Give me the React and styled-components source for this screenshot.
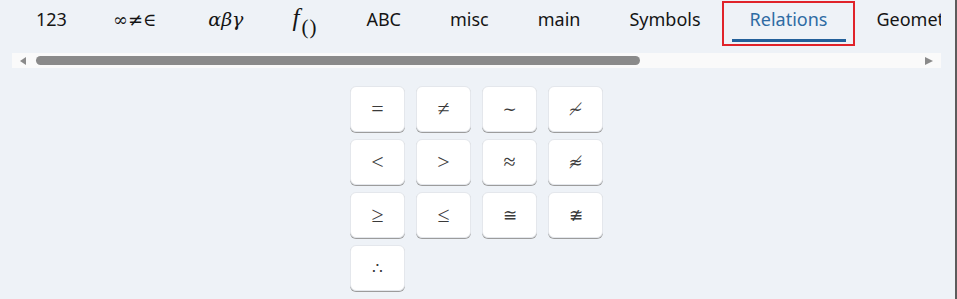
import React from "react";
import styled, { createGlobalStyle } from "styled-components";

const Global = createGlobalStyle`
  html, body { margin: 0; padding: 0; }
  body {
    background: #eef2f7;
    font-family: "Noto Sans", "Open Sans", sans-serif;
    overflow: hidden;
  }
`;

const Page = styled.div`
  box-sizing: border-box;
  width: 957px;
  height: 299px;
  border-right: 2px solid #5c5c5c;
  padding: 0 14px 0 12px;
  background: #eef2f7;
`;

const TabStrip = styled.div`
  display: flex;
  height: 53px;
  overflow: hidden;
  white-space: nowrap;
`;

const Tab = styled.div`
  position: relative;
  box-sizing: border-box;
  flex: none;
  height: 39px;
  margin-top: 4px;
  padding: 3px 24.5px 0;
  font-size: 18px;
  line-height: 24px;
  color: ${(p) => (p.$active ? "#2e6ba3" : "#151515")};
  outline: ${(p) => (p.$active ? "2px solid #e0232a" : "none")};
  outline-offset: 1px;
  &:first-child {
    padding-left: 24px;
  }
  &::after {
    content: "";
    display: ${(p) => (p.$active ? "block" : "none")};
    position: absolute;
    left: 7px;
    right: 6px;
    bottom: 1px;
    height: 3px;
    background: #23609a;
  }
`;

const MathLabel = styled.span`
  font-family: "DejaVu Serif", "Liberation Serif", serif;
  font-size: ${(p) => p.$size || 15}px;
  font-style: ${(p) => (p.$italic ? "italic" : "normal")};
  margin-left: ${(p) => p.$shift || 0}px;
`;

const FuncLabel = styled.span`
  font-family: "Liberation Serif", "DejaVu Serif", serif;
  font-style: italic;
  font-size: 25px;
  position: relative;
  top: -1px;
`;

const Sub = styled.span`
  font-family: "Liberation Serif", serif;
  font-style: normal;
  font-size: 21px;
  position: relative;
  top: 8px;
  margin-left: 2px;
  letter-spacing: 1px;
`;

const ScrollTrack = styled.div`
  display: flex;
  align-items: center;
  height: 15px;
  background: #fafafa;
  padding: 0 8px;
`;

const Thumb = styled.div`
  height: 9px;
  border-radius: 5px;
  background: #8a8a8a;
  margin-left: 10px;
`;

const Spacer = styled.div`
  flex: 1;
`;

const Arrow = styled.svg`
  display: block;
  flex: none;
`;

const KeyGrid = styled.div`
  display: grid;
  grid-template-columns: repeat(4, 55px);
  grid-auto-rows: 46px;
  column-gap: 11px;
  row-gap: 7px;
  justify-content: center;
  margin-top: 18px;
`;

const Key = styled.button`
  box-sizing: border-box;
  border: 1px solid #e4e7ec;
  border-radius: 6px;
  background: #ffffff;
  box-shadow: 0 1px 0 #9c9c9c;
  font-family: ${(p) =>
    p.$alt ? '"DejaVu Serif", serif' : '"Liberation Serif", "DejaVu Serif", serif'};
  font-size: ${(p) => (p.$alt ? 17 : 22)}px;
  font-weight: 400;
  color: #3a3a3a;
  display: flex;
  align-items: center;
  justify-content: center;
  padding: 0;
  cursor: pointer;
`;

const tabs = [
  { key: "123", label: "123" },
  { key: "ops", label: <MathLabel $size={18} $shift={-3}>∞≠∈</MathLabel> },
  { key: "greek", label: <MathLabel $size={19} $italic $shift={3}>αβγ</MathLabel> },
  { key: "func", label: <FuncLabel>f<Sub>()</Sub></FuncLabel> },
  { key: "abc", label: "ABC" },
  { key: "misc", label: "misc" },
  { key: "main", label: "main" },
  { key: "sym", label: "Symbols" },
  { key: "rel", label: "Relations", active: true },
  { key: "geo", label: "Geometry" },
];

const keys = [
  { s: "=" },
  { s: "≠" },
  { s: "∼", alt: true },
  { s: "≁", alt: true },
  { s: "<" },
  { s: ">" },
  { s: "≈" },
  { s: "≉", alt: true },
  { s: "≥" },
  { s: "≤" },
  { s: "≅", alt: true },
  { s: "≇", alt: true },
  { s: "∴", alt: true },
];

export default function App() {
  return (
    <>
      <Global />
      <Page>
        <TabStrip>
          {tabs.map((t) => (
            <Tab key={t.key} $active={t.active}>
              {t.label}
            </Tab>
          ))}
        </TabStrip>
        <ScrollTrack>
          <Arrow width="6" height="8" viewBox="0 0 6 8">
            <path d="M6 0 L0 4 L6 8 Z" fill="#8a8a8a" />
          </Arrow>
          <Thumb style={{ width: 604 }} />
          <Spacer />
          <Arrow width="8" height="8" viewBox="0 0 8 8">
            <path d="M0 0 L8 4 L0 8 Z" fill="#8a8a8a" />
          </Arrow>
        </ScrollTrack>
        <KeyGrid>
          {keys.map((k) => (
            <Key key={k.s} $alt={k.alt}>
              {k.s}
            </Key>
          ))}
        </KeyGrid>
      </Page>
    </>
  );
}
